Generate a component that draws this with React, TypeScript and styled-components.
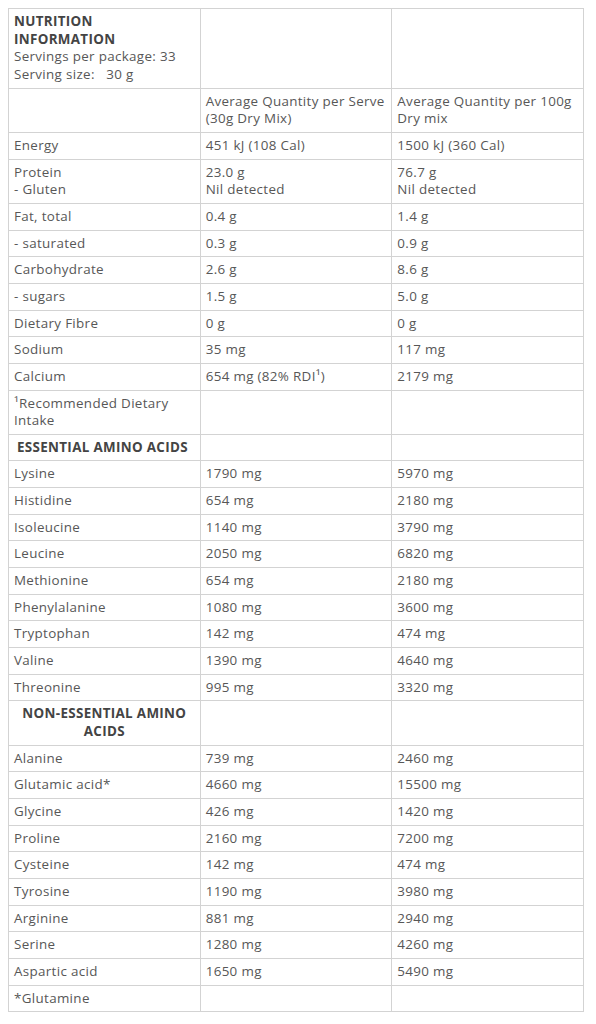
import React from "react";
import styled, { createGlobalStyle } from "styled-components";

const GlobalStyle = createGlobalStyle`
  body {
    margin: 8px;
    background: #ffffff;
    font-family: "Open Sans", "Liberation Sans", Arial, sans-serif;
  }
`;

const Table = styled.table`
  width: 576px;
  border-collapse: collapse;
  table-layout: fixed;
  color: #575757;
  font-size: 13.4px;
  line-height: 17.65px;
  letter-spacing: 0.33px;
`;

const Cell = styled.td<{ $bold?: boolean; $center?: boolean }>`
  border: 1px solid #d3d3d3;
  padding: 4px 5px;
  vertical-align: top;
  text-align: ${(p) => (p.$center ? "center" : "left")};
  font-weight: ${(p) => (p.$bold ? 700 : 400)};
  color: ${(p) => (p.$bold ? "#444444" : "#575757")};
`;

const Title = styled.div`
  font-weight: 700;
  color: #444444;
`;

const SectionLabel = styled.span`
  padding-left: 3px;
`;

type Row = [string, string, string];

const main: Row[] = [
  ["Fat, total", "0.4 g", "1.4 g"],
  ["- saturated", "0.3 g", "0.9 g"],
  ["Carbohydrate", "2.6 g", "8.6 g"],
  ["- sugars", "1.5 g", "5.0 g"],
  ["Dietary Fibre", "0 g", "0 g"],
  ["Sodium", "35 mg", "117 mg"],
  ["Calcium", "654 mg (82% RDI\u00b9)", "2179 mg"],
];

const essential: Row[] = [
  ["Lysine", "1790 mg", "5970 mg"],
  ["Histidine", "654 mg", "2180 mg"],
  ["Isoleucine", "1140 mg", "3790 mg"],
  ["Leucine", "2050 mg", "6820 mg"],
  ["Methionine", "654 mg", "2180 mg"],
  ["Phenylalanine", "1080 mg", "3600 mg"],
  ["Tryptophan", "142 mg", "474 mg"],
  ["Valine", "1390 mg", "4640 mg"],
  ["Threonine", "995 mg", "3320 mg"],
];

const nonEssential: Row[] = [
  ["Alanine", "739 mg", "2460 mg"],
  ["Glutamic acid*", "4660 mg", "15500 mg"],
  ["Glycine", "426 mg", "1420 mg"],
  ["Proline", "2160 mg", "7200 mg"],
  ["Cysteine", "142 mg", "474 mg"],
  ["Tyrosine", "1190 mg", "3980 mg"],
  ["Arginine", "881 mg", "2940 mg"],
  ["Serine", "1280 mg", "4260 mg"],
  ["Aspartic acid", "1650 mg", "5490 mg"],
];

function DataRows({ rows }: { rows: Row[] }) {
  return (
    <>
      {rows.map(([name, serve, per100]) => (
        <tr key={name}>
          <Cell>{name}</Cell>
          <Cell>{serve}</Cell>
          <Cell>{per100}</Cell>
        </tr>
      ))}
    </>
  );
}

export default function App() {
  return (
    <>
      <GlobalStyle />
      <Table>
        <tbody>
          <tr>
            <Cell>
              <Title>
                NUTRITION
                <br />
                INFORMATION
              </Title>
              Servings per package: 33
              <br />
              Serving size:&nbsp;&nbsp; 30 g
            </Cell>
            <Cell />
            <Cell />
          </tr>
          <tr>
            <Cell />
            <Cell>Average Quantity per Serve (30g Dry Mix)</Cell>
            <Cell>Average Quantity per 100g Dry mix</Cell>
          </tr>
          <tr>
            <Cell>Energy</Cell>
            <Cell>451 kJ (108 Cal)</Cell>
            <Cell>1500 kJ (360 Cal)</Cell>
          </tr>
          <tr>
            <Cell>
              Protein
              <br />- Gluten
            </Cell>
            <Cell>
              23.0 g
              <br />
              Nil detected
            </Cell>
            <Cell>
              76.7 g
              <br />
              Nil detected
            </Cell>
          </tr>
          <DataRows rows={main} />
          <tr>
            <Cell>{"\u00b9Recommended Dietary Intake"}</Cell>
            <Cell />
            <Cell />
          </tr>
          <tr>
            <Cell $bold>
              <SectionLabel>ESSENTIAL AMINO ACIDS</SectionLabel>
            </Cell>
            <Cell />
            <Cell />
          </tr>
          <DataRows rows={essential} />
          <tr>
            <Cell $bold $center>
              NON-ESSENTIAL AMINO ACIDS
            </Cell>
            <Cell />
            <Cell />
          </tr>
          <DataRows rows={nonEssential} />
          <tr>
            <Cell>*Glutamine</Cell>
            <Cell />
            <Cell />
          </tr>
        </tbody>
      </Table>
    </>
  );
}
